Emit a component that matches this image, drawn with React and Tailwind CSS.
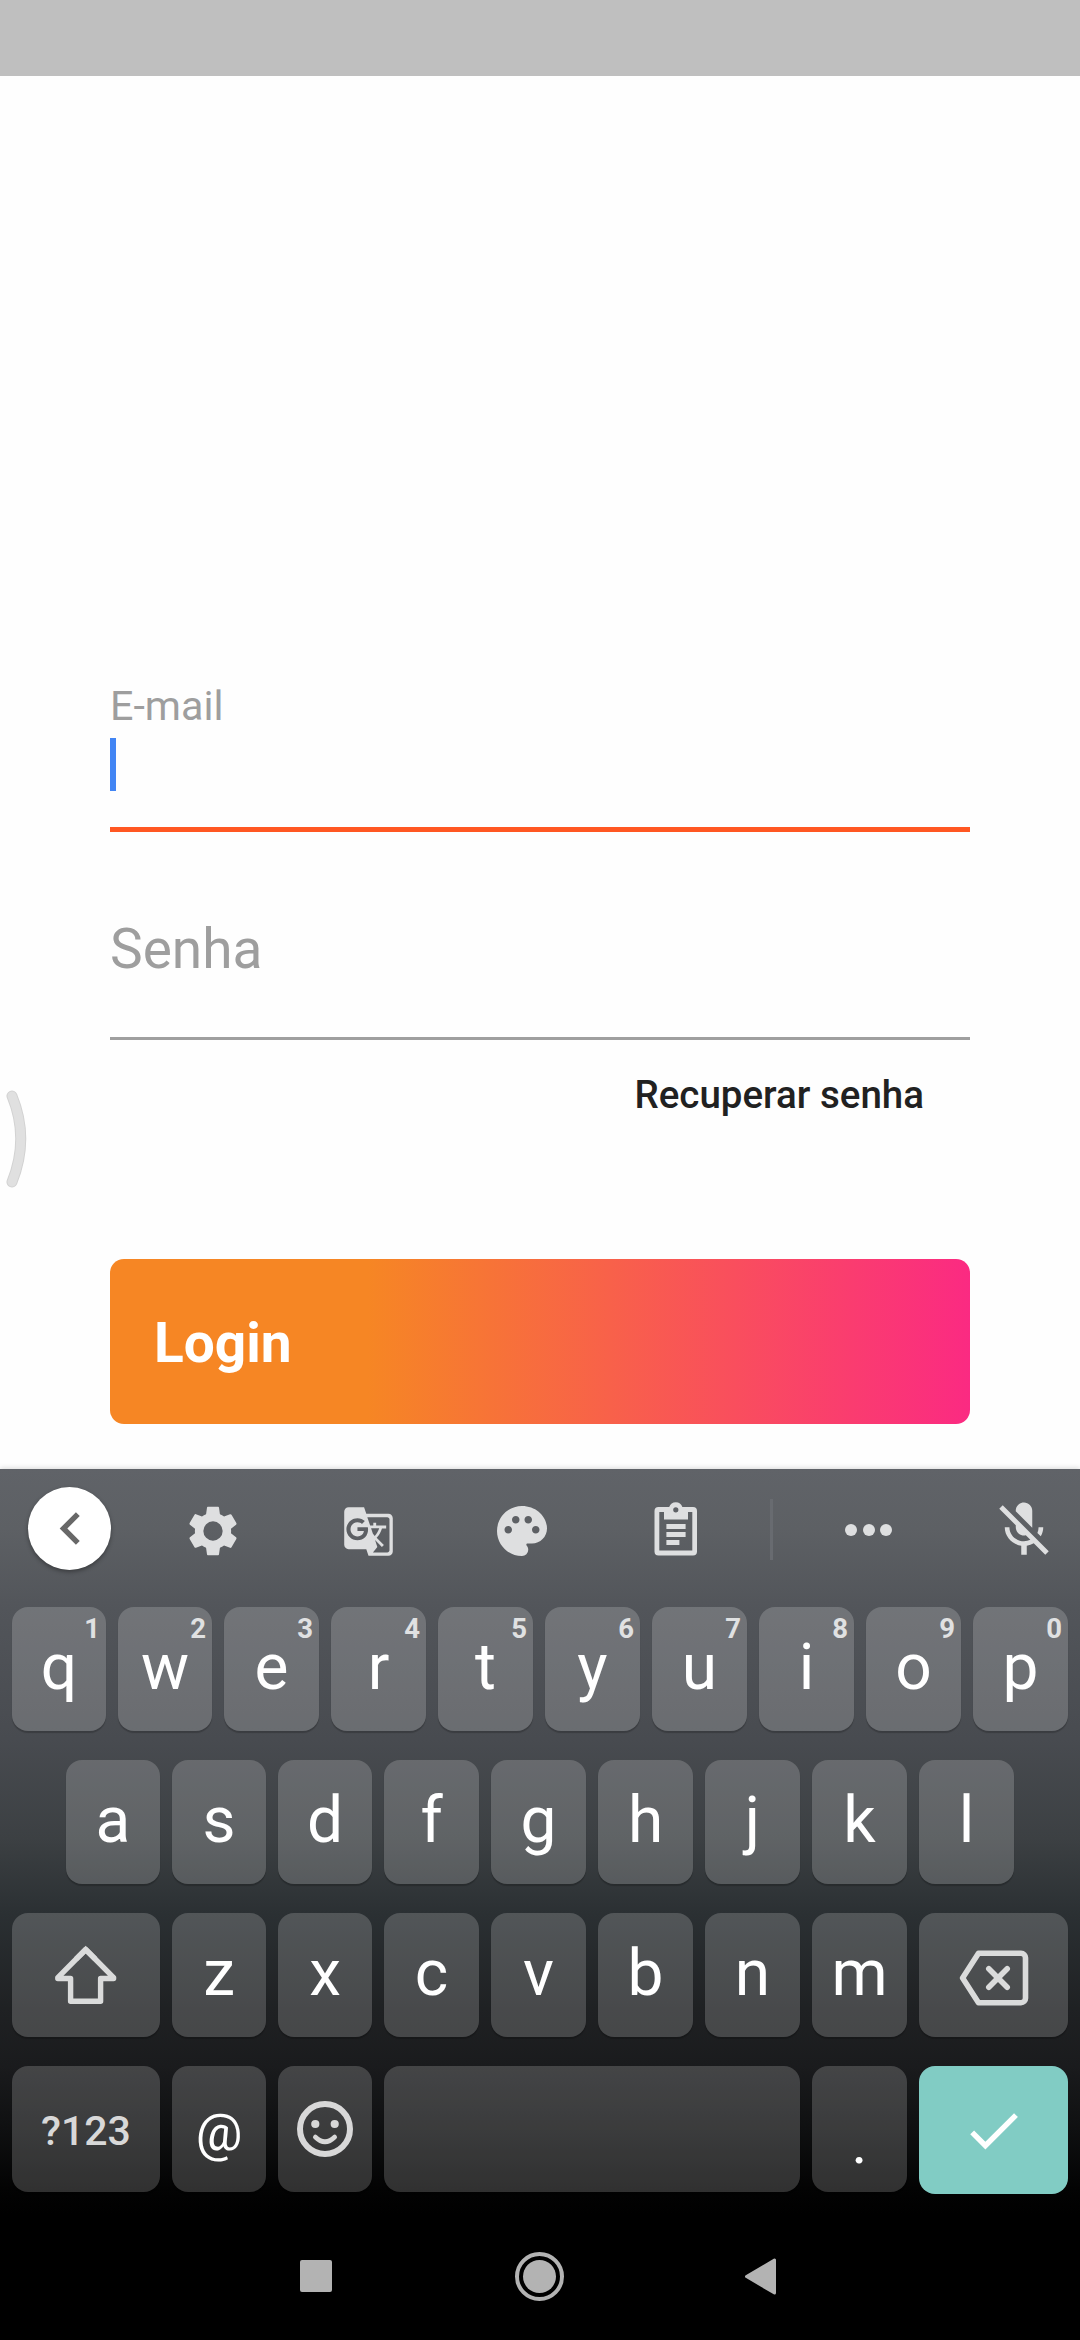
import React from "react";
import { MdChevronLeft, MdGTranslate, MdPalette, MdMicOff, MdCheck } from "react-icons/md";

const ROW_1 = [..."qwertyuiop"].map((letter, i) => ({ letter, digit: (i + 1) % 10 }));
const ROW_2 = [..."asdfghjkl"];
const ROW_3 = [..."zxcvbnm"];

function Key({ className = "", children }) {
  return (
    <button
      type="button"
      className={`relative flex h-full min-w-0 items-center justify-center rounded-[16px] bg-white/[0.185] text-[64px] leading-none text-white shadow-[0_2px_1px_rgba(0,0,0,0.2)] ${className}`}
    >
      {children}
    </button>
  );
}

function LetterKey({ letter, digit, narrow }) {
  return (
    <Key className={narrow ? "w-[94px]" : "w-[95px]"}>
      <span className="pb-[3px]">{letter}</span>
      {digit !== undefined && (
        <span className="absolute top-[8px] right-[6px] text-[27.5px] leading-[27px] font-bold text-[#e0e1e2]">{digit}</span>
      )}
    </Key>
  );
}

function GearIcon() {
  return (
    <svg viewBox="0 0 24 24" className="size-[58px]" fill="currentColor">
      <path
        fillRule="evenodd"
        d="M19.43 12.98c.04-.32.07-.64.07-.98s-.03-.66-.07-.98l2.11-1.65c.19-.15.24-.42.12-.64l-2-3.46c-.12-.22-.39-.3-.61-.22l-2.49 1c-.52-.4-1.08-.73-1.69-.98l-.38-2.65C14.46 2.18 14.25 2 14 2h-4c-.25 0-.46.18-.49.42l-.38 2.65c-.61.25-1.17.59-1.69.98l-2.49-1c-.23-.09-.49 0-.61.22l-2 3.46c-.13.22-.07.49.12.64l2.11 1.65c-.04.32-.07.65-.07.98s.03.66.07.98l-2.11 1.65c-.19.15-.24.42-.12.64l2 3.46c.12.22.39.3.61.22l2.49-1c.52.4 1.08.73 1.69.98l.38 2.65c.03.24.24.42.49.42h4c.25 0 .46-.18.49-.42l.38-2.65c.61-.25 1.17-.59 1.69-.98l2.49 1c.23.09.49 0 .61-.22l2-3.46c.12-.22.07-.49-.12-.64l-2.11-1.65zM12 16a4 4 0 1 1 0-8 4 4 0 0 1 0 8z"
      />
    </svg>
  );
}

function ClipboardIcon() {
  return (
    <svg viewBox="0 0 44 54" className="h-[54px] w-[44px]" fill="currentColor">
      <path
        fillRule="evenodd"
        d="M4.5 5H15.2a7 7 0 0 1 13.2 0H39a4 4 0 0 1 4 4V49.500a4 4 0 0 1-4 4H4.500a4 4 0 0 1-4-4V9a4 4 0 0 1 4-4zM5.300 10V48.500H38.300V10H34V17.500H10V10zM21.800 5.200a2.600 2.600 0 1 0 0 5.200a2.600 2.600 0 0 0 0-5.200z"
      />
      <path d="M12.400 22H31.600V27H12.400zM12.400 30H31.600V35H12.400zM12.400 38H25.400V43H12.400z" />
    </svg>
  );
}

function ShiftIcon() {
  return (
    <svg viewBox="0 0 64 64" className="size-[64px]" fill="none" stroke="#dadbdb" strokeWidth="5.4">
      <path strokeLinejoin="round" d="M31.700 6.500L59.600 34.600V35.500H46.600V58.200H16.600V35.500H3.800V34.600z" />
      <path strokeLinejoin="miter" d="M22 16.200L31.700 6.500L41.400 16.200" />
    </svg>
  );
}

function BackspaceIcon() {
  return (
    <svg viewBox="0 0 72 58" className="h-[58px] w-[72px]" fill="none" stroke="#dadbdb" strokeWidth="5.600" strokeLinecap="round" strokeLinejoin="round">
      <path d="M4.600 29L20.500 4.300H63a4.500 4.500 0 0 1 4.500 4.500V49.200a4.500 4.500 0 0 1-4.500 4.500H20.500z" />
      <path d="M30.800 19.700L49.200 38.300M49.200 19.700L30.800 38.300" />
    </svg>
  );
}

function SmileIcon() {
  return (
    <svg viewBox="0 0 56 56" className="size-[56px]" fill="none" stroke="#d8d8d8">
      <circle cx="28" cy="28" r="25" strokeWidth="6" />
      <circle cx="18.300" cy="23" r="4.100" fill="#d8d8d8" stroke="none" />
      <circle cx="37.700" cy="23" r="4.100" fill="#d8d8d8" stroke="none" />
      <path d="M18.300 36Q28 45.500 37.700 36" strokeWidth="4.600" strokeLinecap="round" />
    </svg>
  );
}

function Toolbar() {
  return (
    <div className="flex h-[120px] items-center text-[#dedfe0]">
      <div className="mb-[2px] ml-[28px] flex size-[83px] items-center justify-center rounded-full bg-white text-[#686868] shadow-[0_2px_4px_rgba(0,0,0,0.35)]">
        <MdChevronLeft className="mr-[-2px] size-[65px]" />
      </div>
      <div className="mt-[4px] ml-[72.500px]"><GearIcon /></div>
      <MdGTranslate className="mt-[4px] ml-[100.300px] size-[53px]" />
      <MdPalette className="mt-[4px] ml-[97.700px] size-[60px]" />
      <div className="ml-[101.500px]"><ClipboardIcon /></div>
      <div className="ml-[72.500px] h-[61px] w-[3px] bg-[#686b70]" />
      <div className="mt-[1px] ml-[72px] flex gap-[5.500px]">
        <span className="size-[12px] rounded-full bg-current" />
        <span className="size-[12px] rounded-full bg-current" />
        <span className="size-[12px] rounded-full bg-current" />
      </div>
      <MdMicOff className="mt-[1px] ml-[98.500px] size-[66px]" />
    </div>
  );
}

function Keyboard() {
  return (
    <section className="h-[871px] bg-[linear-gradient(to_bottom,#606368_0px,#5d6064_60px,#52555a_140px,#484b50_270px,#3c4043_370px,#2b3033_444px,#1f2123_540px,#1a1b1d_597px,#0f1011_660px,#030303_720px,#000_745px)] shadow-[0_-1px_5px_rgba(0,0,0,0.15)]">
      <Toolbar />
      <div className="flex flex-col gap-[29px] px-[12px] pt-[18px]">
        <div className="flex h-[124px] gap-[12px]">
          {ROW_1.map((k, i) => <LetterKey key={k.letter} {...k} narrow={i < 2} />)}
        </div>
        <div className="flex h-[124px] gap-[12px] px-[54px]">
          {ROW_2.map((l, i) => <LetterKey key={l} letter={l} narrow={i < 3} />)}
        </div>
        <div className="flex h-[124px] gap-[12px]">
          <Key className="w-[148px]"><ShiftIcon /></Key>
          {ROW_3.map((l, i) => <LetterKey key={l} letter={l} narrow={i < 2} />)}
          <Key className="w-[149px]"><span className="pt-[6px]"><BackspaceIcon /></span></Key>
        </div>
        <div className="flex h-[126px] gap-[12px]">
          <Key className="w-[148px]"><span className="pt-[4px] text-[41px] font-medium text-[#d8d8d8]">?123</span></Key>
          <Key className="w-[94px]"><span className="pt-[8px] text-[52px]">@</span></Key>
          <Key className="w-[94px]"><SmileIcon /></Key>
          <Key className="flex-1" />
          <Key className="w-[95px]"><span className="pt-[27px] text-[60px]">.</span></Key>
          <button type="button" className="flex h-[128px] w-[149px] items-center justify-center rounded-[16px] bg-[#81ccc4] text-white">
            <MdCheck className="size-[65px]" />
          </button>
        </div>
      </div>
      <nav className="mt-[59px] flex h-[50px] items-center text-[#b3b3b3]">
        <span className="ml-[300px] size-[32px] rounded-[2px] bg-current" />
        <span className="ml-[183px] flex size-[49px] items-center justify-center rounded-full border-4 border-current">
          <span className="size-[33px] rounded-full bg-current" />
        </span>
        <svg viewBox="0 0 31 37" className="ml-[181px] h-[37px] w-[31px]" fill="currentColor" stroke="currentColor" strokeWidth="3" strokeLinejoin="round">
          <path d="M1.500 18.500L29.500 2V35z" />
        </svg>
      </nav>
    </section>
  );
}

export default function App() {
  return (
    <div className="flex h-[2340px] w-[1080px] flex-col overflow-hidden bg-[#fefefe] font-['Roboto',sans-serif]">
      <header className="h-[76px] shrink-0 bg-[#bfbfbf]" />
      <main className="relative flex h-[1393px] shrink-0 flex-col px-[110px]">
        <label className="mt-[606px] text-[41.250px] leading-[48px] text-[#9e9e9e]">E-mail</label>
        <div className="mt-[8px] h-[53px] w-[5.500px] bg-[#4285f4]" />
        <div className="mt-[35.500px] h-[5.500px] bg-[#ff5722]" />
        <label className="mt-[85px] text-[55px] leading-[64px] text-[#9e9e9e]">Senha</label>
        <div className="mt-[56px] h-[3px] bg-[#9f9f9f]" />
        <a className="mt-[32px] mr-[46px] self-end text-[38.500px] leading-[46px] font-medium text-[#212121]">Recuperar senha</a>
        <button
          type="button"
          className="mt-[141px] flex h-[165px] items-center rounded-[14px] bg-[linear-gradient(to_right,#f68624_30%,#fb2a82_100%)] px-[44px] pt-[2px] text-[55px] leading-[64px] font-bold text-white"
        >
          Login
        </button>
        <svg viewBox="0 0 30 110" className="absolute top-[1008px] left-0 h-[110px] w-[30px]" fill="none" strokeLinecap="round">
          <path d="M12 12Q29.500 54.500 12 98" stroke="#d2d2d2" strokeWidth="11" />
          <path d="M12 12Q29.500 54.500 12 98" stroke="#e0e0e0" strokeWidth="9" />
        </svg>
      </main>
      <Keyboard />
    </div>
  );
}
